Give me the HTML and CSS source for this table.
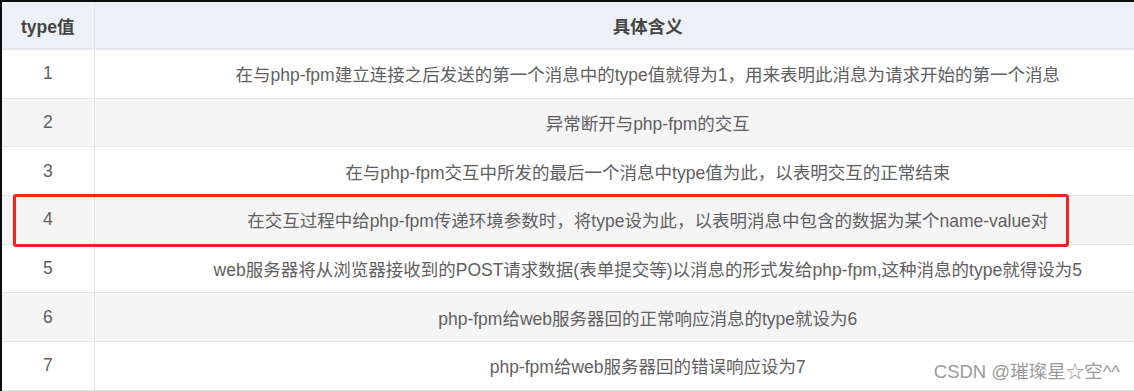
FILE: index.html
```html
<!DOCTYPE html>
<html lang="zh">
<head>
<meta charset="utf-8">
<link rel="stylesheet" href="styles.css">
</head>
<body>
<div class="frame">
  <table class="types">
    <colgroup><col class="c1"><col class="c2"></colgroup>
    <thead>
      <tr><th>type值</th><th>具体含义</th></tr>
    </thead>
    <tbody>
      <tr><td>1</td><td>在与php-fpm建立连接之后发送的第一个消息中的type值就得为1，用来表明此消息为请求开始的第一个消息</td></tr>
      <tr><td>2</td><td>异常断开与php-fpm的交互</td></tr>
      <tr><td>3</td><td>在与php-fpm交互中所发的最后一个消息中type值为此，以表明交互的正常结束</td></tr>
      <tr><td>4</td><td>在交互过程中给php-fpm传递环境参数时，将type设为此，以表明消息中包含的数据为某个name-value对</td></tr>
      <tr><td>5</td><td>web服务器将从浏览器接收到的POST请求数据(表单提交等)以消息的形式发给php-fpm,这种消息的type就得设为5</td></tr>
      <tr><td>6</td><td>php-fpm给web服务器回的正常响应消息的type就设为6</td></tr>
      <tr><td>7</td><td>php-fpm给web服务器回的错误响应设为7</td></tr>
    </tbody>
  </table>
  <div class="highlight"></div>
  <div class="watermark">CSDN @璀璨星☆空^^</div>
</div>
</body>
</html>
```
FILE: styles.css
```css
html, body {
  margin: 0;
  padding: 0;
  background: #0d0d0d;
  overflow: hidden;
  width: 1134px;
  height: 391px;
}
.frame {
  position: relative;
  margin: 2px 0 0 2px;
  width: 1132px;
  height: 389px;
  background: #fff;
  overflow: hidden;
}
.types {
  border-collapse: collapse;
  table-layout: fixed;
  width: 1200px;
  font-family: "Liberation Sans", "Noto Sans CJK SC", sans-serif;
  font-size: 17.5px;
  color: #5f6062;
}
.c1 { width: 92px; }
.types th, .types td {
  text-align: center;
  padding: 0;
  border-right: 1px solid #e4e4e4;
  border-bottom: 1px solid #e4e4e4;
  white-space: nowrap;
}
.types th {
  height: 46px;
  background: #eef1f5;
  color: #444;
  font-weight: bold;
  border-bottom: 2px solid #e4e7eb;
}
.types td {
  height: 47.7px;
}
.types tbody tr:nth-child(even) td {
  background: #f5f5f5;
}
.highlight {
  position: absolute;
  left: 11px;
  top: 192px;
  width: 1050px;
  height: 47px;
  border: 3px solid #f52222;
  border-radius: 3px;
}
.watermark {
  position: absolute;
  right: 14px;
  bottom: 8px;
  font-family: "Liberation Sans", "Noto Sans CJK SC", sans-serif;
  font-size: 18.5px;
  color: #9a9a9a;
  text-shadow: 0 0 2px #fff, 0 0 2px #fff;
}
```
